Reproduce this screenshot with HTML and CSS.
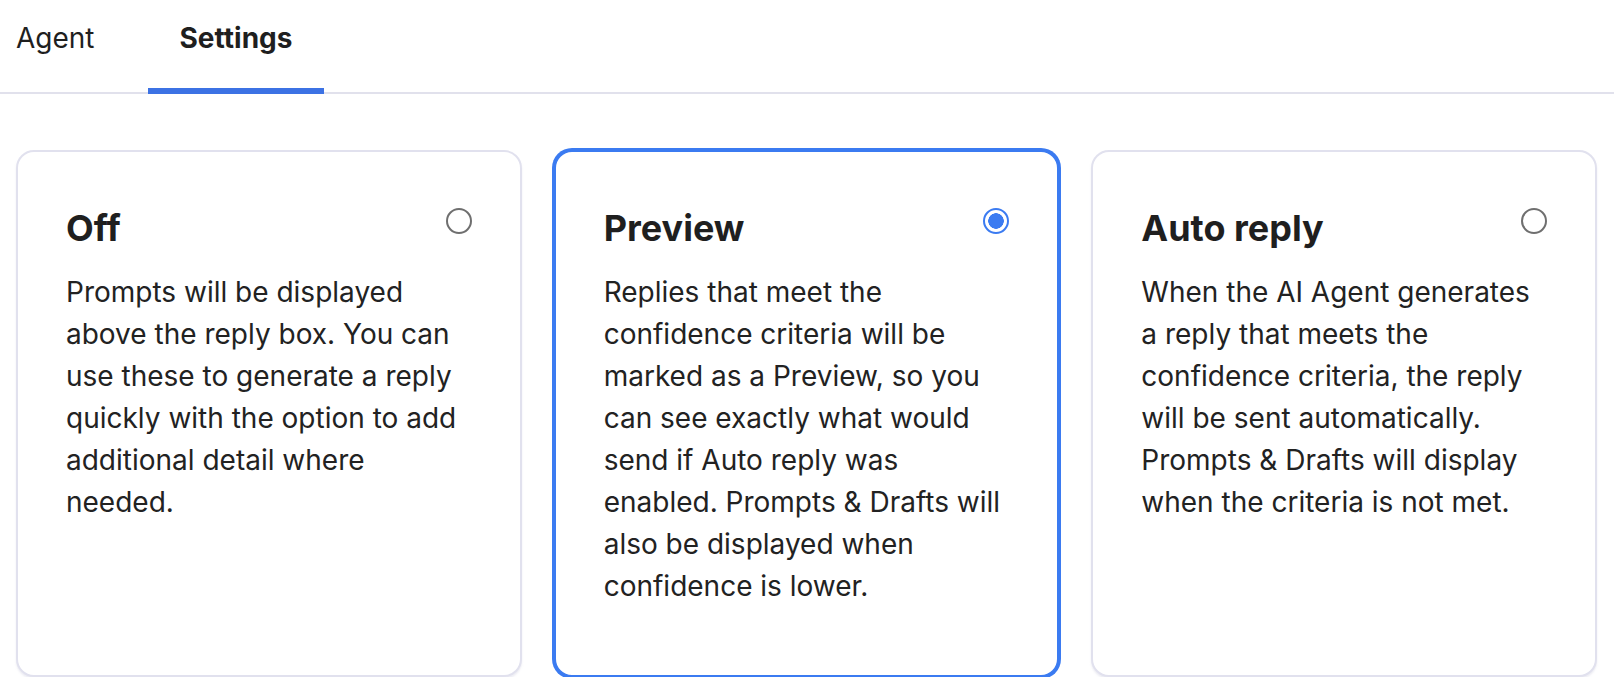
FILE: index.html
```html
<!DOCTYPE html>
<html lang="en">
<head>
<meta charset="utf-8">
<title>Settings</title>
<link rel="stylesheet" href="styles.css">
</head>
<body>
<nav class="tabs">
  <a class="tab">Agent</a>
  <a class="tab active">Settings</a>
</nav>
<main class="options">
  <label class="card">
    <div class="card-head">
      <h2 class="card-title">Off</h2>
      <span class="radio"></span>
    </div>
    <p class="card-text">Prompts will be displayed above the reply box. You can use these to generate a reply quickly with the option to add additional detail where needed.</p>
  </label>
  <label class="card selected">
    <div class="card-head">
      <h2 class="card-title">Preview</h2>
      <span class="radio checked"></span>
    </div>
    <p class="card-text">Replies that meet the confidence criteria will be marked as a Preview, so you can see exactly what would send if Auto reply was enabled. Prompts &amp; Drafts will also be displayed when confidence is lower.</p>
  </label>
  <label class="card">
    <div class="card-head">
      <h2 class="card-title">Auto reply</h2>
      <span class="radio"></span>
    </div>
    <p class="card-text">When the AI Agent generates a reply that meets the confidence criteria, the reply will be sent automatically. Prompts &amp; Drafts will display when the criteria is not met.</p>
  </label>
</main>
</body>
</html>
```

FILE: styles.css
```css
* { box-sizing: border-box; }

html, body {
  margin: 0;
  padding: 0;
  background: #ffffff;
}

body {
  font-family: Inter, "Noto Sans", "Liberation Sans", sans-serif;
  color: #1f1f1f;
}

.tabs {
  display: flex;
  gap: 21px;
  height: 94px;
  border-bottom: 2px solid #e1e1ec;
}

.tab {
  display: flex;
  align-items: flex-start;
  padding: 19px 32px 0;
  font-size: 28px;
  line-height: 38px;
  color: #1f1f1f;
  cursor: pointer;
}

.tab:first-child {
  padding-left: 16px;
}

.tab.active {
  font-weight: 700;
  border-bottom: 6px solid #3c72e4;
  margin-bottom: -2px;
}

.options {
  display: grid;
  grid-template-columns: repeat(3, 1fr);
  gap: 32px;
  padding: 56px 17px 0 16px;
}

.card {
  display: block;
  height: 527px;
  padding: 56px 48px 48px;
  border: 2px solid #e1e1ee;
  border-radius: 18px;
  background: #fff;
  box-shadow: 0 2px 2px rgba(200, 200, 220, 0.35);
  cursor: pointer;
}

.card.selected {
  border-color: #3b7bf1;
  box-shadow: 0 0 0 2px #3b7bf1;
}

.card-head {
  display: flex;
  justify-content: space-between;
  align-items: flex-start;
}

.card-title {
  margin: 0;
  font-size: 36px;
  line-height: 40px;
  font-weight: 700;
  color: #1f1f1f;
}

.radio {
  flex: none;
  width: 26px;
  height: 26px;
  border: 2px solid #6f6f6f;
  border-radius: 50%;
  background: #fff;
}

.radio.checked {
  border-color: #3b7bf1;
  background: radial-gradient(circle, #3b7bf1 0 7.5px, #fff 8px);
}

.card-text {
  margin: 23px 0 0;
  font-size: 28px;
  line-height: 42px;
  color: #222;
}
```
